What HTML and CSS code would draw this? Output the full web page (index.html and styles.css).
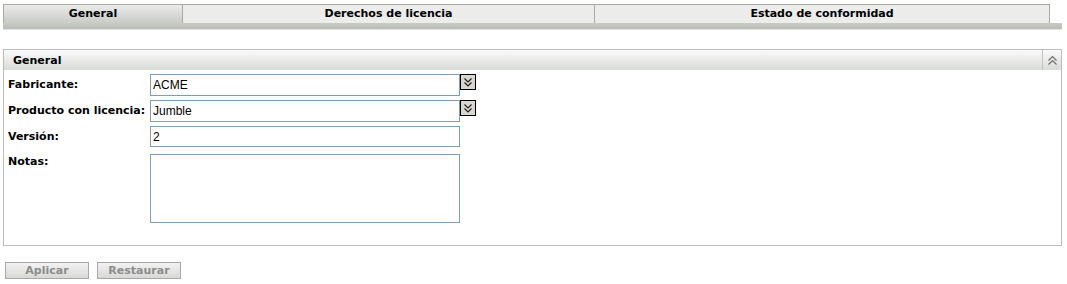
FILE: index.html
```html
<!DOCTYPE html>
<html lang="es">
	<head>
		<meta charset="UTF-8" />
		<title>General</title>
		<link rel="stylesheet" href="styles.css">
	</head>
	<body>
		<div class="tabs">
			<div class="tab tab-active tab-general">General</div>
			<div class="tab tab-rights">Derechos de licencia</div>
			<div class="tab tab-state">Estado de conformidad</div>
		</div>
		<div class="tabbar"></div>

		<div class="panel">
			<div class="panel-head">
				<span class="panel-title">General</span>
				<span class="collapse">
					<svg width="11" height="11" viewBox="0 0 11 11">
						<path d="M1.5 5.5 L5.5 1.5 L9.5 5.5 M1.5 9.5 L5.5 5.5 L9.5 9.5" fill="none" stroke="#6d6d6d" stroke-width="1.2"/>
					</svg>
				</span>
			</div>
			<div class="form">
				<label class="label">Fabricante:</label>
				<div class="field">
					<input class="input" value="ACME" />
					<span class="dd">
						<svg width="14" height="14" viewBox="0 0 14 14">
							<path d="M3.5 3.5 L7 7 L10.5 3.5 M3.5 7.5 L7 11 L10.5 7.5" fill="none" stroke="#202020" stroke-width="1.2"/>
						</svg>
					</span>
				</div>

				<label class="label">Producto con licencia:</label>
				<div class="field">
					<input class="input" value="Jumble" />
					<span class="dd">
						<svg width="14" height="14" viewBox="0 0 14 14">
							<path d="M3.5 3.5 L7 7 L10.5 3.5 M3.5 7.5 L7 11 L10.5 7.5" fill="none" stroke="#202020" stroke-width="1.2"/>
						</svg>
					</span>
				</div>

				<label class="label">Versión:</label>
				<div class="field">
					<input class="input input-short" value="2" />
				</div>

				<label class="label">Notas:</label>
				<div class="field">
					<textarea class="notes"></textarea>
				</div>
			</div>
		</div>

		<div class="actions">
			<button class="btn">Aplicar</button>
			<button class="btn">Restaurar</button>
		</div>
	</body>
</html>
```

FILE: styles.css
```css
html {
	background: #ffffff;
	color: #000000;
	font-family: "DejaVu Sans", Verdana, sans-serif;
}
body {
	margin: 0;
	padding: 4px 0 0 3px;
}
.tabs {
	display: flex;
	width: 1047px;
	height: 19px;
}
.tab {
	box-sizing: border-box;
	height: 19px;
	border-top: 1px solid #a9aaa6;
	border-right: 1px solid #a9aaa6;
	background: #ececea;
	font-size: 11px;
	font-weight: bold;
	line-height: 18px;
	text-align: center;
}
.tab-active {
	border-left: 1px solid #a9aaa6;
	background: linear-gradient(#ebebe9, #c9cbc7);
}
.tab-general {
	width: 180px;
}
.tab-rights {
	width: 412px;
}
.tab-state {
	width: 455px;
}
.tabbar {
	width: 1059px;
	height: 6px;
	background: linear-gradient(#c8cac6, #b9bbb7);
	border-bottom: 1px solid #e4e4e2;
}
.panel {
	box-sizing: border-box;
	width: 1059px;
	height: 197px;
	margin-top: 19px;
	border: 1px solid #bdbdbd;
}
.panel-head {
	display: flex;
	height: 20px;
	background: linear-gradient(#fafafa, #d9dbd7);
}
.panel-title {
	flex: 1;
	padding-left: 9px;
	font-size: 11px;
	font-weight: bold;
	line-height: 21px;
}
.collapse {
	display: flex;
	align-items: center;
	justify-content: center;
	width: 18px;
	border-left: 1px solid #c6c6c4;
}
.form {
	display: grid;
	grid-template-columns: 142px auto;
	row-gap: 4px;
	padding: 4px 0 0 4px;
}
.label {
	padding-top: 4px;
	font-size: 11px;
	font-weight: bold;
}
.field {
	display: flex;
	align-items: flex-start;
}
.input {
	box-sizing: border-box;
	width: 310px;
	height: 22px;
	margin: 0;
	padding: 1px 2px;
	border: 1px solid #7f9db9;
	font-family: "Liberation Sans", Arial, sans-serif;
	font-size: 12px;
	color: #000000;
}
.input-short {
	height: 21px;
}
.dd {
	display: flex;
	align-items: center;
	justify-content: center;
	box-sizing: border-box;
	width: 16px;
	height: 16px;
	border: 1px solid #000000;
	background: #d8d6d0;
}
.notes {
	box-sizing: border-box;
	width: 310px;
	height: 69px;
	margin: 3px 0 0 0;
	border: 1px solid #7f9db9;
	resize: none;
}
.actions {
	display: flex;
	gap: 8px;
	margin: 16px 0 0 2px;
}
.btn {
	box-sizing: border-box;
	width: 84px;
	height: 17px;
	padding: 0;
	border: 1px solid #a8a8a8;
	background: linear-gradient(#f2f2f2, #d8d8d6);
	font-family: "DejaVu Sans", Verdana, sans-serif;
	font-size: 11px;
	font-weight: bold;
	color: #8c8c8c;
}
```
